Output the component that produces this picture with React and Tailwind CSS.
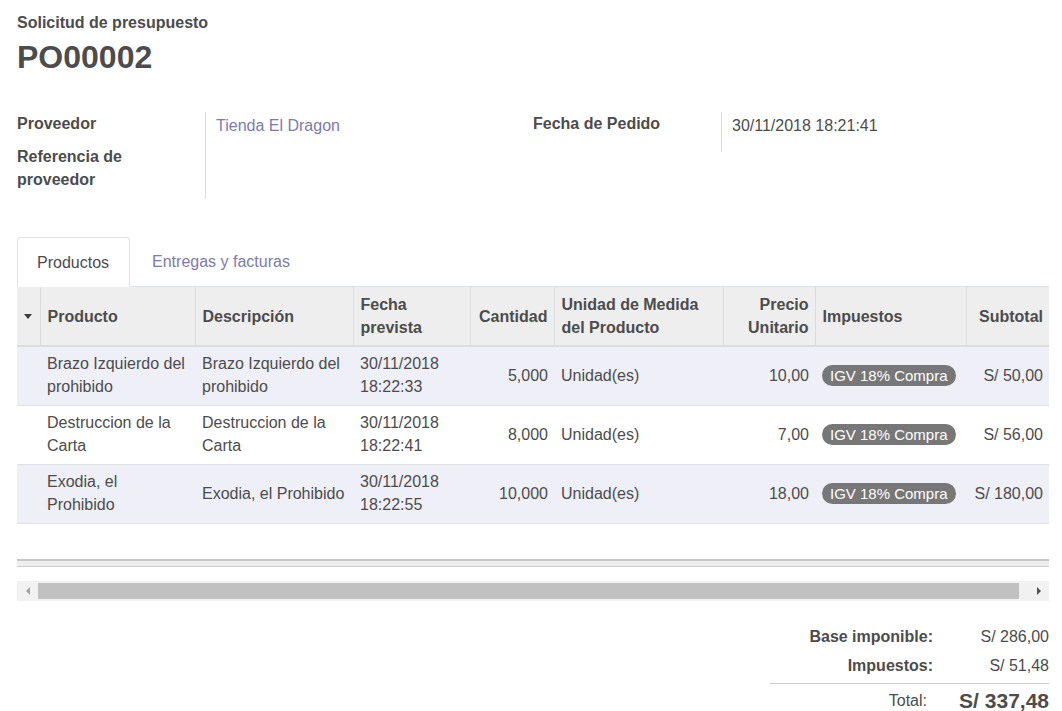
import React from 'react'

const lines = [
  { product: 'Brazo Izquierdo del prohibido', desc: 'Brazo Izquierdo del prohibido', date: '30/11/2018 18:22:33', qty: '5,000', price: '10,00', subtotal: 'S/ 50,00', shade: true },
  { product: 'Destruccion de la Carta', desc: 'Destruccion de la Carta', date: '30/11/2018 18:22:41', qty: '8,000', price: '7,00', subtotal: 'S/ 56,00', shade: false },
  { product: 'Exodia, el Prohibido', desc: 'Exodia, el Prohibido', date: '30/11/2018 18:22:55', qty: '10,000', price: '18,00', subtotal: 'S/ 180,00', shade: true },
]

const th = 'border-l border-[#dcdcdc] py-[6px] pl-[7px] pr-[6px] align-middle font-bold'
const td = 'pt-[5px] pb-[7px] pl-[7px] pr-[6px] align-middle'

export default function App() {
  return (
    <div className="min-h-screen bg-white pl-[17px] pr-[13px] pt-[11px] pb-10 text-[16px] leading-[23px] text-[#4c4c4c] font-['Liberation_Sans',Arial,sans-serif]">
      {/* Title */}
      <div className="font-bold">Solicitud de presupuesto</div>
      <h1 className="mt-[4px] text-[32px] leading-[38px] font-bold">PO00002</h1>

      {/* Header fields */}
      <div className="mt-[36px] grid grid-cols-2">
        <div className="flex">
          <div className="w-[188px] shrink-0 font-bold">
            <div className="pb-[10px]">Proveedor</div>
            <div className="pb-[8px]">Referencia de<br />proveedor</div>
          </div>
          <div className="border-l border-[#dcdcdc] pl-[10px] pt-[2px] text-[#7c7bad]">Tienda El Dragon</div>
        </div>
        <div className="flex items-start">
          <div className="w-[188px] shrink-0 font-bold">Fecha de Pedido</div>
          <div className="h-[40px] border-l border-[#dcdcdc] pl-[10px] pt-[2px]">30/11/2018 18:21:41</div>
        </div>
      </div>

      {/* Tabs */}
      <div className="mt-[38px] flex border-b border-[#dee2e6]">
        <div className="-mb-px flex h-[50px] items-center rounded-t-[4px] border border-b-white border-[#dee2e6] bg-white pl-[19px] pr-[20px]">Productos</div>
        <div className="flex h-[49px] items-center px-[22px] text-[#7c7bad]">Entregas y facturas</div>
      </div>

      {/* Order lines */}
      <table className="w-[1032px] table-fixed border-collapse">
        <colgroup>
          <col className="w-[23px]" />
          <col className="w-[155px]" />
          <col className="w-[158px]" />
          <col className="w-[117px]" />
          <col className="w-[84px]" />
          <col className="w-[169px]" />
          <col className="w-[92px]" />
          <col className="w-[151px]" />
          <col className="w-[83px]" />
        </colgroup>
        <thead>
          <tr className="bg-[#eeeeee] border-b-2 border-[#dcdcdc] text-left">
            <th className="py-[6px] align-middle">
              <div className="mx-auto h-0 w-0 border-x-[4px] border-t-[5px] border-x-transparent border-t-[#3c3c3c]" />
            </th>
            <th className={th}>Producto</th>
            <th className={th}>Descripción</th>
            <th className={th}>Fecha prevista</th>
            <th className={th + ' text-right'}>Cantidad</th>
            <th className={th}>Unidad de Medida del Producto</th>
            <th className={th + ' text-right'}>Precio Unitario</th>
            <th className={th}>Impuestos</th>
            <th className={th + ' text-right'}>Subtotal</th>
          </tr>
        </thead>
        <tbody>
          {lines.map((l) => (
            <tr key={l.product} className={(l.shade ? 'bg-[#eeeff7] ' : 'bg-white ') + 'border-b border-[#dee2e6]'}>
              <td className="py-[6px]" />
              <td className={td}>{l.product}</td>
              <td className={td}>{l.desc}</td>
              <td className={td}>{l.date}</td>
              <td className={td + ' text-right'}>{l.qty}</td>
              <td className={td}>Unidad(es)</td>
              <td className={td + ' text-right'}>{l.price}</td>
              <td className={td}>
                <span className="inline-flex h-[21px] items-center rounded-full bg-[#777777] px-[8px] text-[15px] leading-[21px] text-white whitespace-nowrap">IGV 18% Compra</span>
              </td>
              <td className="pt-[5px] pb-[7px] pl-[2px] pr-[6px] text-right align-middle whitespace-nowrap">{l.subtotal}</td>
            </tr>
          ))}
        </tbody>
      </table>

      {/* Footer row */}
      <div className="mt-[35px] h-[8px] border-t-2 border-b border-t-[#c6c6c6] border-b-[#cccccc] bg-[#eeeeee]" />

      {/* Horizontal scrollbar */}
      <div className="mt-[14px] flex h-[20px] items-center bg-[#f1f1f1]">
        <div className="flex w-[21px] justify-center">
          <div className="h-0 w-0 border-y-[4px] border-r-[4px] border-y-transparent border-r-[#a3a3a3]" />
        </div>
        <div className="h-[16px] w-[981px] bg-[#c1c1c1]" />
        <div className="flex-1" />
        <div className="flex w-[21px] justify-center">
          <div className="h-0 w-0 border-y-[4px] border-l-[4px] border-y-transparent border-l-[#505050]" />
        </div>
      </div>

      {/* Totals */}
      <div className="mt-[21px] flex justify-end">
        <div className="w-[279px]">
          <div className="flex h-[29px] items-center">
            <div className="flex-1 pr-[12px] text-right font-bold">Base imponible:</div>
            <div className="w-[104px] text-right">S/ 286,00</div>
          </div>
          <div className="flex h-[29px] items-center">
            <div className="flex-1 pr-[12px] text-right font-bold">Impuestos:</div>
            <div className="w-[104px] text-right">S/ 51,48</div>
          </div>
          <div className="mt-[3px] flex h-[33px] items-center border-t border-[#cccccc]">
            <div className="flex-1 pr-[18px] text-right">Total:</div>
            <div className="w-[104px] text-right text-[21px] font-bold whitespace-nowrap">S/ 337,48</div>
          </div>
        </div>
      </div>
    </div>
  )
}
